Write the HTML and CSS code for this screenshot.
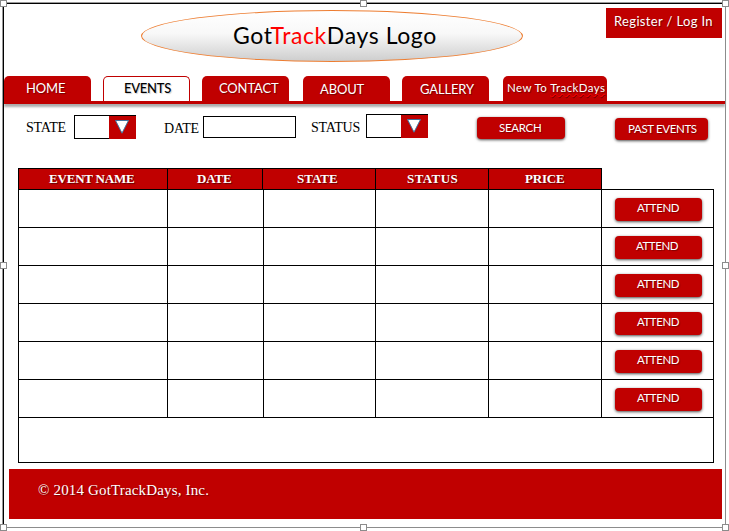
FILE: index.html
```
<!DOCTYPE html>
<html lang="en">
<head>
<meta charset="utf-8">
<title>GotTrackDays - Events</title>
<link rel="stylesheet" href="styles.css">
</head>
<body>
<div class="page">
  <header class="top">
    <div class="logo"><span class="logo-text">Got<span class="accent">Track</span>Days Logo</span></div>
    <a class="login">Register / Log In</a>
  </header>

  <nav class="tabs">
    <a class="tab home">HOME</a>
    <a class="tab active">EVENTS</a>
    <a class="tab contact">CONTACT</a>
    <a class="tab about">ABOUT</a>
    <a class="tab gallery">GALLERY</a>
    <a class="tab newto">New To <span class="misspelt">TrackDays</span></a>
  </nav>

  <section class="filters">
    <label class="label state">STATE</label>
    <div class="select first"><span class="arrow"><svg width="16" height="16" viewBox="0 0 16 16"><path d="M1.5 1.5H14.5L8 14.2Z"/></svg></span></div>
    <label class="label date">DATE</label>
    <div class="input"></div>
    <label class="label status">STATUS</label>
    <div class="select second"><span class="arrow"><svg width="16" height="16" viewBox="0 0 16 16"><path d="M1.5 1.5H14.5L8 14.2Z"/></svg></span></div>
    <a class="button search">SEARCH</a>
    <a class="button past">PAST EVENTS</a>
  </section>

  <section class="events">
    <div class="head">
      <div class="th name">EVENT NAME</div><div class="th day">DATE</div><div class="th st">STATE</div><div class="th stat">STATUS</div><div class="th price">PRICE</div>
    </div>
    <div class="body">
      <div class="row"><i></i><i></i><i></i><i></i><i></i><div class="cell"><a class="button attend">ATTEND</a></div></div>
      <div class="row"><i></i><i></i><i></i><i></i><i></i><div class="cell"><a class="button attend shifted">ATTEND</a></div></div>
      <div class="row"><i></i><i></i><i></i><i></i><i></i><div class="cell"><a class="button attend">ATTEND</a></div></div>
      <div class="row"><i></i><i></i><i></i><i></i><i></i><div class="cell"><a class="button attend">ATTEND</a></div></div>
      <div class="row"><i></i><i></i><i></i><i></i><i></i><div class="cell"><a class="button attend">ATTEND</a></div></div>
      <div class="row"><i></i><i></i><i></i><i></i><i></i><div class="cell"><a class="button attend">ATTEND</a></div></div>
      <div class="summary"></div>
    </div>
  </section>

  <footer class="footer">© 2014 GotTrackDays, Inc.</footer>

  <div class="frame">
    <b class="handle l t"></b><b class="handle c t"></b><b class="handle r t"></b>
    <b class="handle l m"></b><b class="handle r m"></b>
    <b class="handle l b"></b><b class="handle c b"></b><b class="handle r b"></b>
  </div>
</div>
</body>
</html>
```
FILE: styles.css
```
* { box-sizing: border-box; }
body { margin: 0; background: #fff; overflow: hidden; }
.page {
  position: relative;
  width: 729px;
  height: 531px;
  font-family: Lato, "Liberation Sans", sans-serif;
  font-size: 13px;
  color: #000;
  white-space: nowrap;
}

.top {
  display: flex;
  justify-content: space-between;
  align-items: flex-start;
  height: 76px;
  padding: 8px 7px 0 141px;
}
.logo {
  width: 382px;
  height: 52px;
  margin-top: 2px;
  padding-left: 91px;
  border: 1px solid #ed7d31;
  border-radius: 50%;
  background: linear-gradient(#fff 0%, #f8f8f8 45%, #cecece 100%);
  font-size: 23px;
  line-height: 49px;
}
.logo-text { letter-spacing: 0.6px; }
.accent { color: #f00; }
.login {
  width: 116px;
  height: 30px;
  padding-left: 8px;
  background: #c00000;
  color: #fff;
  font-size: 13px;
  line-height: 26px;
  letter-spacing: 0.35px;
  text-shadow: 1px 1px 1px rgba(0, 0, 0, .4);
}

.tabs {
  display: flex;
  height: 28px;
  margin: 0 4px;
  border-bottom: 3px solid #c00000;
  box-shadow: 0 3px 2px rgba(0, 0, 0, .32);
}
.tab {
  width: 87px;
  height: 25px;
  margin-right: 12px;
  border-radius: 5px 5px 0 0;
  background: #c00000;
  color: #fff;
  line-height: 24px;
  letter-spacing: -0.15px;
  text-shadow: 1px 1px 1px rgba(0, 0, 0, .4);
}
.home { padding-left: 22px; }
.active {
  padding-left: 20px;
  border: 1px solid #c00000;
  border-bottom: 0;
  background: #fff;
  color: #000;
  font-weight: 500;
  line-height: 22px;
  letter-spacing: -0.25px;
  text-shadow: 1px 1px 1px rgba(0, 0, 0, .2);
}
.contact { padding-left: 17px; margin-right: 14px; }
.about { padding-left: 17px; line-height: 26px; }
.gallery { padding-left: 18px; margin-right: 14px; line-height: 26px; }
.newto {
  width: 104px;
  margin-right: 0;
  padding-left: 4px;
  font-size: 11.5px;
  line-height: 23px;
  letter-spacing: 0.38px;
}
.misspelt { text-decoration: underline wavy #f00 1px; text-underline-offset: 1px; text-decoration-skip-ink: none; }

.filters {
  display: flex;
  align-items: flex-start;
  height: 64px;
  padding: 10px 0 0 26px;
}
.label {
  font-family: "Liberation Serif", serif;
  font-size: 14px;
  line-height: 18px;
  letter-spacing: -0.2px;
}
.state { width: 48px; margin-top: 5px; }
.date { width: 39px; margin-top: 6px; }
.status { width: 55px; margin-top: 5px; }
.select {
  display: flex;
  justify-content: flex-end;
  width: 62px;
  height: 24px;
  border: 1px solid #000;
  border-right: 0;
}
.first { margin: 1px 28px 0 0; }
.second { margin-right: 49px; }
.arrow {
  width: 27px;
  height: 23px;
  padding: 3px 0 0 5px;
  background: #c00000;
}
.arrow svg { display: block; fill: #fff; stroke: #41719c; stroke-width: 1; }
.input {
  width: 93px;
  height: 22px;
  margin: 2px 15px 0 0;
  border: 1px solid #000;
}
.button {
  display: block;
  border-radius: 4px;
  background: #c00000;
  box-shadow: 0 1px 3px rgba(0, 0, 0, .7);
  color: #fff;
  font-size: 11.5px;
  text-shadow: 1px 1px 1px rgba(0, 0, 0, .35);
}
.search { width: 88px; height: 22px; margin: 3px 50px 0 0; padding-left: 22px; line-height: 21px; letter-spacing: -0.3px; }
.past { width: 93px; height: 22px; margin-top: 4px; padding-left: 13px; line-height: 21px; letter-spacing: -0.35px; }

.events { width: 696px; margin-left: 18px; }
.head {
  display: grid;
  grid-template-columns: 149px 95px 113px 113px 113px;
  width: 584px;
  height: 21px;
  border: 1px solid #000;
  border-bottom: 0;
  background: #c00000;
  color: #fff;
  font: bold 13px/20px "Liberation Serif", serif;
  text-shadow: 1px 1px 1px rgba(0, 0, 0, .5);
}
.th { height: 20px; border-right: 1px solid #000; }
.name { padding-left: 30px; letter-spacing: -0.2px; }
.day { padding-left: 29px; letter-spacing: -0.2px; }
.st { padding-left: 34px; }
.stat { padding-left: 31px; letter-spacing: 0.4px; }
.price { padding-left: 36px; border-right: 0; letter-spacing: -0.2px; }
.body { border: 1px solid #000; }
.row {
  display: grid;
  grid-template-columns: 149px 96px 112px 113px 113px 111px;
  height: 38px;
  border-bottom: 1px solid #000;
}
.row i { border-right: 1px solid #000; }
.cell { padding: 8px 0 0 13px; }
.attend { width: 87px; height: 23px; padding-left: 22px; line-height: 20px; letter-spacing: -0.45px; }
.shifted { padding-left: 21px; }
.summary { height: 44px; }

.footer {
  width: 713px;
  height: 50px;
  margin: 6px 0 0 9px;
  padding-left: 29px;
  background: #c00000;
  color: #fff;
  font: 15px/42px "Liberation Serif", serif;
  letter-spacing: 0.16px;
  text-shadow: 1px 1px 1px rgba(0, 0, 0, .4);
}

.frame {
  position: absolute;
  inset: 3px 3px 3px 3px;
  border: 1px solid #000;
  border-right-color: #8c8c8c;
  border-bottom-color: #8c8c8c;
  box-shadow: -1px -1px 0 #9a9a9a;
}
.handle {
  position: absolute;
  width: 7px;
  height: 7px;
  border: 1px solid #8c8c8c;
  background: #fff;
}
.l { left: -4px; }
.c { left: 356px; }
.r { right: -4px; }
.t { top: -4px; }
.m { top: 258px; }
.b { bottom: -4px; }
```
